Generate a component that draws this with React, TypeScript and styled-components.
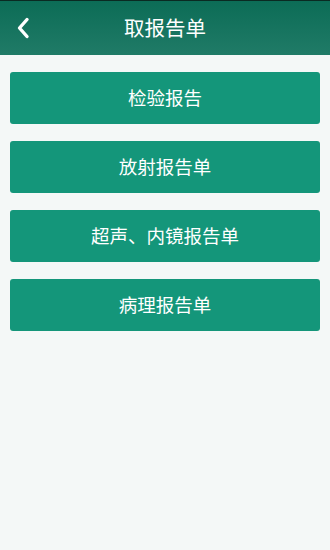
import React from "react";
import styled, { createGlobalStyle } from "styled-components";

const Global = createGlobalStyle`
  html, body { margin: 0; padding: 0; background: #f4f8f7; }
  body { font-family: "Noto Sans CJK SC", "Noto Sans", sans-serif; }
  * { box-sizing: border-box; }
`;

const Page = styled.div`
  width: 330px;
  min-height: 550px;
  background: #f4f8f7;
  display: flex;
  flex-direction: column;
`;

const Header = styled.header`
  height: 55px;
  border-top: 1px solid #0a2a22;
  background: linear-gradient(to bottom, #0c6c56, #207b67);
  display: grid;
  grid-template-columns: 48px 1fr 48px;
  align-items: center;
`;

const BackButton = styled.button`
  border: 0;
  background: transparent;
  padding: 0 0 0 16px;
  height: 100%;
  display: flex;
  align-items: center;
  cursor: pointer;
`;

const Title = styled.h1`
  margin: 0;
  color: #ffffff;
  font-size: 20.5px;
  font-weight: 400;
  text-align: center;
  letter-spacing: 0;
  line-height: 1;
  padding-bottom: 2px;
`;

const List = styled.div`
  display: flex;
  flex-direction: column;
  gap: 17px;
  padding: 17px 10px 0 10px;
`;

const ItemButton = styled.button`
  height: 52px;
  width: 100%;
  border: 0;
  border-radius: 3px;
  background: #14967a;
  color: #ffffff;
  font-family: "Noto Sans CJK SC", "Noto Sans", sans-serif;
  font-size: 18.5px;
  font-weight: 400;
  display: flex;
  align-items: center;
  justify-content: center;
  padding: 0 0 2px 0;
  cursor: pointer;
`;

const items = ["检验报告", "放射报告单", "超声、内镜报告单", "病理报告单"];

export default function App() {
  return (
    <Page>
      <Global />
      <Header>
        <BackButton aria-label="返回">
          <svg width="14" height="22" viewBox="0 0 14 22">
            <polyline
              points="11,2.5 3.5,11 11,19.5"
              fill="none"
              stroke="#ffffff"
              strokeWidth="3.4"
              strokeLinecap="round"
              strokeLinejoin="round"
            />
          </svg>
        </BackButton>
        <Title>取报告单</Title>
        <span />
      </Header>
      <List>
        {items.map((t) => (
          <ItemButton key={t}>{t}</ItemButton>
        ))}
      </List>
    </Page>
  );
}
